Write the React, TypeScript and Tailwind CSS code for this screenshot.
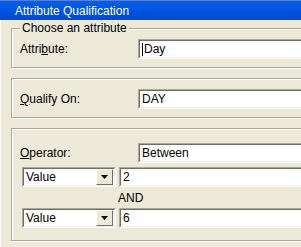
import { ReactNode } from 'react';

const font = { fontFamily: '"Liberation Sans", Arial, sans-serif' };

function Sunken({ children, className = '' }: { children?: ReactNode; className?: string }) {
  return (
    <div className={`border border-t-[#ACA899] border-l-[#ACA899] border-b-white border-r-white ${className}`}>
      <div className="flex h-full items-center border border-t-[#716F64] border-l-[#716F64] border-b-[#F1EFE2] border-r-[#F1EFE2] bg-white pl-[2px] text-[12px] text-black">
        {children}
      </div>
    </div>
  );
}

function Group({ title, className, children }: { title?: string; className: string; children: ReactNode }) {
  return (
    <div
      className={`relative w-[330px] min-w-[330px] shrink-0 border border-[#ACA899] shadow-[inset_1px_1px_0_#fff,1px_1px_0_#fff] ${className}`}
    >
      {title && (
        <span className="absolute -top-[8px] left-[8px] bg-[#ECE9D8] px-[2px] text-[12px] leading-[14px] text-black">
          {title}
        </span>
      )}
      {children}
    </div>
  );
}

function Combo({ value }: { value: string }) {
  return (
    <Sunken className="h-[20px] w-[94px] shrink-0">
      <span className="flex-1">{value}</span>
      <div className="mr-px flex h-[16px] w-[17px] items-center justify-center border border-t-white border-l-white border-b-[#716F64] border-r-[#716F64] bg-[#ECE9D8]">
        <svg width="7" height="4" viewBox="0 0 7 4">
          <path d="M0 0h7L3.5 4z" fill="#000" />
        </svg>
      </div>
    </Sunken>
  );
}

export default function App() {
  return (
    <div className="h-[247px] w-[301px] overflow-hidden bg-[#ECE9D8]" style={font}>
      <div className="flex h-[20px] items-center border-t border-[#6B7FA6] bg-gradient-to-b from-[#0A5CEA] via-[#0054E3] to-[#0048D0] pl-[15px] text-[12px] text-white">
        Attribute Qualification
      </div>
      <div className="h-[227px] w-[301px] overflow-hidden border-l border-white pl-[10px]">
        <Group title="Choose an attribute" className="mt-[8px] h-[40px]">
          <div className="flex items-center pl-[8px] pt-[10px]">
            <span className="w-[118px] shrink-0 text-[12px] text-black">
              Attri<span className="underline">b</span>ute:
            </span>
            <Sunken className="h-[20px] flex-1">
              <span className="mr-px h-[13px] w-px bg-black" />
              Day
            </Sunken>
          </div>
        </Group>
        <Group className="mt-[10px] h-[40px]">
          <div className="flex items-center pl-[8px] pt-[10px]">
            <span className="w-[118px] shrink-0 text-[12px] text-black">
              <span className="underline">Q</span>ualify On:
            </span>
            <Sunken className="h-[20px] flex-1">DAY</Sunken>
          </div>
        </Group>
        <Group className="mt-[10px] h-[113px]">
          <div className="flex items-center pl-[8px] pt-[14px]">
            <span className="w-[118px] shrink-0 text-[12px] text-black">
              <span className="underline">O</span>perator:
            </span>
            <Sunken className="h-[20px] flex-1">Between</Sunken>
          </div>
          <div className="mt-[4px] flex items-center gap-[3px] pl-[10px]">
            <Combo value="Value" />
            <Sunken className="h-[20px] flex-1">2</Sunken>
          </div>
          <div className="flex h-[21px] items-center pl-[106px] text-[12px] text-black">AND</div>
          <div className="flex items-center gap-[3px] pl-[10px]">
            <Combo value="Value" />
            <Sunken className="h-[20px] flex-1">6</Sunken>
          </div>
        </Group>
      </div>
    </div>
  );
}
